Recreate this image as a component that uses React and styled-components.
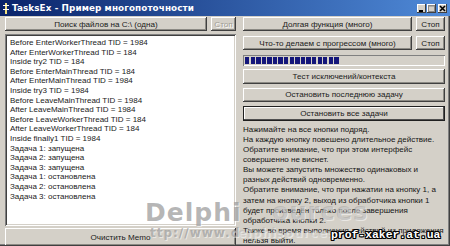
import React from "react";
import styled, { createGlobalStyle } from "styled-components";

const GlobalStyle = createGlobalStyle`
  html, body {
    margin: 0;
    padding: 0;
    background: #d4d0c8;
  }
  body {
    width: 450px;
    height: 246px;
    overflow: hidden;
    font-family: "Liberation Sans", Arial, sans-serif;
  }
`;

const memoLines = [
  "Before EnterWorkerThread TID = 1984",
  "After EnterWorkerThread TID = 184",
  "Inside try2 TID = 184",
  "Before EnterMainThread TID = 184",
  "After EnterMainThread TID = 1984",
  "Inside try3 TID = 1984",
  "Before LeaveMainThread TID = 1984",
  "After LeaveMainThread TID = 1984",
  "Before LeaveWorkerThread TID = 184",
  "After LeaveWorkerThread TID = 184",
  "Inside finally1 TID = 1984",
  "Задача 1: запущена",
  "Задача 2: запущена",
  "Задача 3: запущена",
  "Задача 1: остановлена",
  "Задача 2: остановлена",
  "Задача 3: остановлена",
];

const hintLines = [
  "Нажимайте на все кнопки подряд.",
  "На каждую кнопку повешено длительное действие.",
  "Обратите внимание, что при этом интерфейс",
  "совершенно не виснет.",
  "Вы можете запустить множество одинаковых и",
  "разных действий одновременно.",
  "Обратите внимание, что при нажатии на кнопку 1, а",
  "затем на кнопку 2, выход из обработчика кнопки 1",
  "будет произведён только после завершения",
  "обработчика кнопки 2.",
  "Также во время выполнения действий из приложения",
  "нельзя выйти.",
];

const Window = styled.div`
  position: relative;
  width: 450px;
  height: 246px;
  background: #d4d0c8;
  display: flex;
  flex-direction: column;
  overflow: hidden;
  box-shadow: inset -1px -1px #404040, inset -2px -2px #808080;
`;

const TitleBar = styled.div`
  height: 16px;
  flex: none;
  display: flex;
  align-items: center;
  gap: 3px;
  padding: 0 3px 0 3px;
  background: linear-gradient(to right, #0a246a, #4f8ad8);
  color: #fff;
  font-family: "DejaVu Sans", "Liberation Sans", sans-serif;
  font-weight: bold;
  font-size: 8.8px;
  letter-spacing: 0.1px;
`;

const Title = styled.span`
  flex: 1;
  white-space: nowrap;
`;

const Controls = styled.div`
  display: flex;
  gap: 1px;
`;

const CtrlButton = styled.div`
  width: 9px;
  height: 9px;
  background: #d4d0c8;
  box-shadow: inset -1px -1px #404040, inset 1px 1px #fff;
  display: flex;
  align-items: center;
  justify-content: center;
  margin-left: ${({ gap }) => gap || 0}px;
`;

const Body = styled.div`
  flex: 1;
  display: flex;
  gap: 7px;
  padding: 1px 0 0 5px;
`;

const LeftColumn = styled.div`
  width: 231px;
  display: flex;
  flex-direction: column;
`;

const RightColumn = styled.div`
  width: 202px;
  display: flex;
  flex-direction: column;
`;

const ButtonRow = styled.div`
  display: flex;
  gap: 4px;
  margin-top: ${({ mt }) => mt || 0}px;
`;

const Button = styled.div`
  height: 14px;
  flex: ${({ w }) => (w ? "none" : 1)};
  width: ${({ w }) => (w ? `${w}px` : "auto")};
  margin-top: ${({ mt }) => mt || 0}px;
  background: #d4d0c8;
  box-sizing: border-box;
  display: flex;
  align-items: center;
  justify-content: center;
  font-size: 8.1px;
  white-space: nowrap;
  color: ${({ disabled }) => (disabled ? "#a09d96" : "#1a1a1a")};
  text-shadow: ${({ disabled }) => (disabled ? "1px 1px #fff" : "none")};
  box-shadow: ${({ focused }) =>
    focused
      ? "inset 0 0 0 1px #202020, inset -2px -2px #505050, inset 2px 2px #fff"
      : "inset -1px -1px #404040, inset 1px 1px #fff, inset -2px -2px #8c8a84"};
`;

const Memo = styled.div`
  height: 192px;
  margin-top: 3px;
  background: #fff;
  box-sizing: border-box;
  padding: 4px 0 0 5px;
  box-shadow: inset 1px 1px #808080, inset -1px -1px #fff, inset 2px 2px #404040,
    inset -2px -2px #d4d0c8;
  font-size: 8px;
  color: #1a1a1a;
  overflow: hidden;
`;

const MemoLine = styled.div`
  height: 9.6px;
  line-height: 9.6px;
  white-space: nowrap;
`;

const Progress = styled.div`
  height: 11px;
  margin-top: 5px;
  box-sizing: border-box;
  padding: 2px 2px;
  display: flex;
  gap: 1.2px;
  box-shadow: inset 1px 1px #808080, inset -1px -1px #fff;
`;

const Block = styled.div`
  width: 4.4px;
  height: 100%;
  background: #14167a;
`;

const Hint = styled.div`
  margin-top: 4px;
  font-size: 8px;
  color: #151515;
`;

const HintLine = styled.div`
  height: 10.1px;
  line-height: 10.1px;
  white-space: nowrap;
`;

const Watermark = styled.div`
  position: absolute;
  left: ${({ x }) => x}px;
  top: ${({ y }) => y}px;
  font-family: "DejaVu Sans", "Liberation Sans", sans-serif;
  font-weight: bold;
  font-size: ${({ size }) => size}px;
  color: rgba(150, 150, 150, ${({ alpha }) => alpha});
  text-shadow: 1px 1px rgba(255, 255, 255, 0.5);
  letter-spacing: ${({ ls }) => ls || 0}px;
  white-space: nowrap;
  pointer-events: none;
`;

const Brand = styled.div`
  position: absolute;
  left: 331px;
  top: 229px;
  font-family: "Liberation Mono", "DejaVu Sans Mono", monospace;
  font-weight: bold;
  font-size: 11.4px;
  color: #fff;
  white-space: nowrap;
  text-shadow: -1px -1px #000, 1px -1px #000, -1px 1px #000, 1px 1px #000,
    0 1px #000, 0 -1px #000, 1px 0 #000, -1px 0 #000;
`;

const AppIcon = () => (
  <svg width="6" height="11" viewBox="0 0 6 11">
    <rect x="2" y="0" width="2" height="11" fill="#f0e080" />
    <rect x="0" y="2" width="6" height="1" fill="#fff" />
    <rect x="0" y="6" width="6" height="1" fill="#fff" />
  </svg>
);

export default function App() {
  const blocks = Array.from({ length: 17 });
  return (
    <>
      <GlobalStyle />
      <Window>
        <TitleBar>
          <AppIcon />
          <Title>TasksEx - Пример многопоточности</Title>
          <Controls>
            <CtrlButton>
              <svg width="7" height="7" viewBox="0 0 7 7">
                <rect x="1" y="5" width="4" height="2" fill="#000" />
              </svg>
            </CtrlButton>
            <CtrlButton>
              <svg width="7" height="7" viewBox="0 0 7 7">
                <rect x="0.5" y="0.5" width="6" height="6" fill="none" stroke="#888" />
                <rect x="0" y="0" width="7" height="1.5" fill="#888" />
              </svg>
            </CtrlButton>
            <CtrlButton gap={1}>
              <svg width="7" height="7" viewBox="0 0 7 7">
                <path d="M1 1 L6 6 M6 1 L1 6" stroke="#000" strokeWidth="1.6" />
              </svg>
            </CtrlButton>
          </Controls>
        </TitleBar>
        <Body>
          <LeftColumn>
            <ButtonRow>
              <Button>Поиск файлов на C:\ (одна)</Button>
              <Button w={25} disabled>
                Стоп
              </Button>
            </ButtonRow>
            <Memo>
              {memoLines.map((line, i) => (
                <MemoLine key={i}>{line}</MemoLine>
              ))}
            </Memo>
            <Button mt={2}>Очистить Memo</Button>
          </LeftColumn>
          <RightColumn>
            <ButtonRow>
              <Button>Долгая функция (много)</Button>
              <Button w={29}>Стоп</Button>
            </ButtonRow>
            <ButtonRow mt={5}>
              <Button>Что-то делаем с прогрессом (много)</Button>
              <Button w={29}>Стоп</Button>
            </ButtonRow>
            <Progress>
              {blocks.map((_, i) => (
                <Block key={i} />
              ))}
            </Progress>
            <Button mt={3}>Тест исключений/контекста</Button>
            <Button mt={4}>Остановить последнюю задачу</Button>
            <Button mt={4} focused>
              Остановить все задачи
            </Button>
            <Hint>
              {hintLines.map((line, i) => (
                <HintLine key={i}>{line}</HintLine>
              ))}
            </Hint>
          </RightColumn>
        </Body>
        <Watermark x={145} y={198} size={25} alpha={0.7} ls={1}>
          Delphi
        </Watermark>
        <Watermark x={272} y={198} size={24} alpha={0.4} ls={1}>
          ources
        </Watermark>
        <Watermark x={150} y={226} size={12} alpha={0.65} ls={1}>
          ttp://www.d
        </Watermark>
        <Watermark x={238} y={226} size={12} alpha={0.22} ls={1}>
          elphisources
        </Watermark>
        <Brand>prof-xaker.at.ua</Brand>
      </Window>
    </>
  );
}
